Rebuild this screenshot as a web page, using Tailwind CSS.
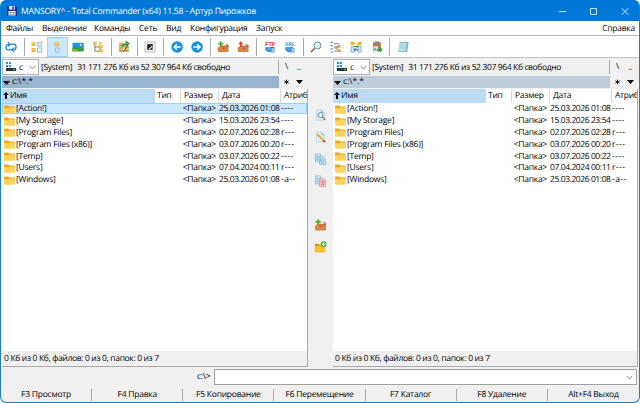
<!DOCTYPE html>
<html lang="ru">
<head>
  <meta charset="UTF-8" />
  <meta name="viewport" content="width=device-width, initial-scale=1.0" />
  <title>Total Commander</title>
  <script src="https://cdn.jsdelivr.net/npm/@tailwindcss/browser@4"></script>
</head>
<body class="bg-white overflow-hidden">

  <!-- Shared icons -->
  <svg class="hidden">
    <symbol id="folder" viewBox="0 0 11 10" preserveAspectRatio="none">
      <path d="M0 1.5Q0 .5 1 .5H4L5.2 1.7H10Q11 1.7 11 2.7V9H0Z" fill="#f0a814" />
      <path d="M0 3.6H4.2L5.4 2.7H11V8.6Q11 9.6 10 9.6H1Q0 9.6 0 8.6Z" fill="#ffd35c" />
    </symbol>
    <symbol id="pack" viewBox="0 0 14 14">
      <path d="M2 7 5 5.5H11L13 4.5 12.5 12.5H1.5L2 7Z" fill="#c9733a" />
      <path d="M1 8 4 6.5 12 7.5 13 12.5H1.5Z" fill="#d98445" />
      <path d="M6 8 9 9M10 3.5 12 5V7" stroke="#a35a2c" fill="none" />
    </symbol>
    <symbol id="globe" viewBox="0 0 14 14">
      <path d="M2 7H10V10Q9 12.5 6 12.5T2 10Z" fill="#2f83c9" />
      <path d="M3 8H8M4 10H7" stroke="#7cc4ee" />
      <path d="M8 8H12V13H7V11H8Z" fill="#67a6cf" />
      <path d="M9 9.5H12M9 11.5H12" stroke="#e2f1fa" stroke-width=".8" />
    </symbol>
    <symbol id="page" viewBox="0 0 14 14">
      <path d="M2.5 1.5H8L11 4.5V12.5H2.5Z" fill="#d8eefa" stroke="#a9cde3" stroke-width=".7" />
      <path d="M8 1.5V4.5H11" fill="#b4d9ee" stroke="#8fbdd8" stroke-width=".6" />
    </symbol>
    <symbol id="drive" viewBox="0 0 12 11">
      <path d="M1 0H3V2H1ZM4 0H6V2H4ZM1 3H3V5H1ZM4 3H6V5H4Z" fill="#1697e8" />
      <path d="M1 6H11V9H1Z" fill="#263743" />
      <path d="M8 7.5H10" stroke="#5bd3de" stroke-width=".8" />
    </symbol>
  </svg>

  <div class="w-[640px] h-[403px] flex flex-col overflow-hidden rounded-[6px] bg-[#f0f0f0] border border-[#1681d2] border-t-0 font-['Open_Sans','Noto_Sans',sans-serif] text-[8.5px] leading-[12px] tracking-[-0.24px] text-black [text-rendering:geometricPrecision] whitespace-nowrap">

    <!-- Title bar -->
    <div class="h-[21px] shrink-0 bg-[#0078d7] text-white flex items-center pl-[6px]">
      <svg class="w-[10px] h-[11px] mr-[4px]" viewBox="0 0 10 11">
        <path d="M0 1H9L10 2V11H0Z" fill="#17339b" />
        <path d="M2 1H8V4.5H2Z" fill="#d9dce6" />
        <path d="M5.5 1.5H7V4H5.5Z" fill="#17339b" />
        <path d="M1.5 6H8.5V10.5H1.5Z" fill="#f2f2f2" />
        <path d="M2.5 7.5H4.5M5.5 7.5H7.5M2.5 9.2H4.5M5.5 9.2H7.5" stroke="#555" stroke-width=".8" />
      </svg>
      <span class="text-[8.6px]">MANSORY^ - Total Commander (x64) 11.58 - Артур Пирожков</span>
      <svg class="w-[72px] h-[10px] ml-auto mr-[9px]" viewBox="0 0 72 10" fill="none" stroke="#fff" stroke-width=".8">
        <path d="M1 5.5H8M32.5 2.5H38.5V8.5H32.5ZM63.7 2.2 70.3 8.8M70.3 2.2 63.7 8.8" />
      </svg>
    </div>

    <!-- Menu -->
    <div class="h-[15px] shrink-0 bg-white border-b border-[#b5b5b5] flex items-center pt-px pl-[5px] pr-[4px]">
      <span class="w-[36px]">Файлы</span>
      <span class="w-[52px]">Выделение</span>
      <span class="w-[45px]">Команды</span>
      <span class="w-[27px]">Сеть</span>
      <span class="w-[24px]">Вид</span>
      <span class="w-[66px]">Конфигурация</span>
      <span>Запуск</span>
      <span class="ml-auto">Справка</span>
    </div>

    <!-- Toolbar -->
    <div class="h-[22px] shrink-0 bg-white border-b border-[#c4c4c4] flex items-center *:shrink-0 [&>svg]:w-[20.2px] [&>svg]:h-[20px] [&>svg]:px-[3.6px] [&>i]:w-[6.1px] [&>i]:h-[18px] [&>i]:bg-[linear-gradient(#aaa,#aaa)] [&>i]:bg-[length:1px_18px] [&>i]:bg-no-repeat [&>i]:bg-center">
      <svg viewBox="0 0 14 14" fill="none" stroke="#1583cf" stroke-width="1.3">
        <path d="M8 10H4Q1.5 10 1.5 7.2T4 4.3H5M6 4H9.5Q12.3 4 12.3 7T9.8 10" />
        <path d="M3.5 1.8 6 4.2 3.5 6.5M10.5 7.7 8 10 10.5 12.2" />
      </svg>
      <i></i>
      <svg viewBox="0 0 14 14">
        <path d="M1 1.5H5.5V6H1ZM1 8H5.5V12.5H1Z" fill="#efba3a" />
        <path d="M2 3H4.8M2 9.5H4.8" stroke="#ffe289" />
        <path d="M7.5 2H12V6H7.5ZM7.5 8H12V12.5H7.5Z" fill="#e7f5fd" stroke="#69acd5" stroke-width=".8" />
      </svg>
      <svg class="bg-[#cce8ff] outline outline-[#99d1ff] -outline-offset-1" viewBox="0 0 14 14">
        <path d="M4.5 1.8H9.5V6H4.5Z" fill="#efb42f" />
        <path d="M5.5 3.5H9" stroke="#ffe48c" />
        <path d="M5.5 8H9V12.5H5.5Z" fill="#e7f5fd" stroke="#69acd5" stroke-width=".8" />
      </svg>
      <svg viewBox="0 0 14 14">
        <path d="M1 2.5H13V11.5H1Z" fill="#2194ec" />
        <path d="M1 8Q4 5.5 7 8T13 7V11.5H1Z" fill="#3a9a27" />
        <path d="M1 9.5Q5 8 8 11.5H1Z" fill="#82bd24" />
        <circle cx="9.8" cy="4.7" r="1.2" fill="#ffe34b" />
      </svg>
      <svg viewBox="0 0 14 14">
        <path d="M3.5 4V11.5H8M3.5 7H8M9 8V11" stroke="#777" fill="none" />
        <path d="M1.5 1.5H5.5V5H1.5ZM7.5 4.5H12V8H7.5ZM7.5 9.5H12V13H7.5Z" fill="#f0b32e" />
        <path d="M2.5 3H5M8.5 6H11M8.5 11H11" stroke="#ffe38a" />
        <path d="M8 1.5H11V3.5H8Z" fill="#f0b32e" />
      </svg>
      <i></i>
      <svg viewBox="0 0 14 14">
        <path d="M1.5 2H6V12.5H1.5Z" fill="#f1c14c" />
        <path d="M6.5 4H12V12.5H6.5Z" fill="#f1c14c" />
        <path d="M2 5H6M2 8H6M2 11H6M8 7H12M8 11H12" stroke="#5a8db1" />
        <path d="M5.5 7Q6 3.5 9.5 3.5M8.5 1 12 3.2 9 5.8" stroke="#168a2c" stroke-width="1.5" fill="none" />
        <path d="M6 12.5 10.5 6" stroke="#665028" />
      </svg>
      <i></i>
      <svg viewBox="0 0 14 14">
        <path d="M1.5 1.5H12.5V12.5H1.5Z" fill="#f2f2f2" stroke="#aaa" stroke-width=".8" />
        <path d="M4 4H10V10H4Z" fill="#111" />
        <path d="M5 9.5 9.5 5V9.5Z" fill="#fff" />
        <path d="M7.5 8.4 9 7.3V9.5H7.5Z" fill="#111" />
      </svg>
      <i></i>
      <svg viewBox="0 0 14 14" fill="none" stroke="#fff" stroke-width="1.7">
        <circle cx="7" cy="7" r="6.2" fill="#1590e4" stroke="none" />
        <path d="M11 7H4M6.8 4 3.8 7 6.8 10" />
      </svg>
      <svg viewBox="0 0 14 14" fill="none" stroke="#fff" stroke-width="1.7">
        <circle cx="7" cy="7" r="6.2" fill="#1590e4" stroke="none" />
        <path d="M3 7H10M7.2 4 10.2 7 7.2 10" />
      </svg>
      <i></i>
      <svg viewBox="0 0 14 14">
        <use href="#pack" width="14" height="14" />
        <path d="M4.5 .8V6.5M1.7 3.5H7.3" stroke="#45ad2b" stroke-width="1.8" />
      </svg>
      <svg viewBox="0 0 14 14">
        <use href="#pack" width="14" height="14" />
        <path d="M4.5 7V3" stroke="#dd3c35" stroke-width="1.8" />
        <path d="M1.7 4 4.5 .8 7.3 4Z" fill="#dd3c35" />
      </svg>
      <i></i>
      <svg viewBox="0 0 14 14">
        <use href="#globe" width="14" height="14" />
        <text x="1.6" y="5.6" letter-spacing="0" font-family="Liberation Mono, monospace" font-size="6" font-weight="bold" fill="#ed1c24">FTP</text>
        <path d="M8 7.4H12" stroke="#ed1c24" />
      </svg>
      <svg viewBox="0 0 14 14">
        <use href="#globe" width="14" height="14" />
        <text x="1.6" y="5.6" letter-spacing="0" font-family="Liberation Mono, monospace" font-size="6" font-weight="bold" fill="#2a9de0">URL</text>
      </svg>
      <i></i>
      <svg viewBox="0 0 14 14">
        <path d="M1.5 12.5 5.5 8.3" stroke="#a4643c" stroke-width="1.7" />
        <circle cx="8.5" cy="5.3" r="3.8" fill="#d9f1ff" stroke="#64819b" />
      </svg>
      <svg viewBox="0 0 14 14">
        <path d="M1 2H3.5M1 5.5H3.5M1 9H3.5M1 12.5H3.5" stroke="#4199d3" stroke-width="1.4" />
        <path d="M4.5 3.5H10M4.5 7H12M4.5 11.5H12.5" stroke="#737980" />
        <path d="M11.5 4.5 6 8 12 11.5" stroke="#d58c23" stroke-width="1.3" fill="none" />
      </svg>
      <svg viewBox="0 0 14 14">
        <path d="M1 1.5H5.5V5H1ZM8.5 1.5H13V5H8.5Z" fill="#edb22c" />
        <path d="M1.5 6.5H5V12.5H1.5ZM9 6.5H12.5V12.5H9Z" fill="#cce8f7" stroke="#68a6cc" stroke-width=".7" />
        <path d="M4.5 6.5H9M7.5 5 9.2 6.5 7.5 8" stroke="#168c36" fill="none" />
        <path d="M9.5 10H5M6.5 8.5 4.8 10 6.5 11.5" stroke="#204a98" fill="none" />
      </svg>
      <svg viewBox="0 0 14 14">
        <path d="M2.5 2H11V12H2.5Z" fill="#bd7435" />
        <path d="M4.5 1H9V3.5H4.5Z" fill="#7d8790" />
        <path d="M3 6H8V13H3Z" fill="#d4edf8" />
        <text x="2.9" y="11.6" font-family="Liberation Sans, sans-serif" font-size="5.5" fill="#4b6b80">A</text>
        <path d="M7 9H10V6.5L13 10 10 13V11H7Z" fill="#3ba52d" />
      </svg>
      <i></i>
      <svg viewBox="0 0 14 14">
        <path d="M3.5 2H13L11.5 12.5H1.5Z" fill="#83bfcd" />
        <path d="M3 2H10.8L9.5 11.5H1.7Z" fill="#b8e2ea" />
        <path d="M4 4H9.5M3.8 6H9.2M3.5 8H9" stroke="#93c8d4" stroke-width=".6" />
        <path d="M3.5 2H12.6" stroke="#668b96" stroke-dasharray="1 .6" />
      </svg>
    </div>

    <!-- File panels -->
    <div class="h-[309px] shrink-0 flex pl-px pr-px">
      <div data-panel="left" class="w-[306px] shrink-0"></div>
      <div class="w-[25px] shrink-0 pt-[46px] flex flex-col items-center [&>svg]:w-[13px] [&>svg]:h-[22.1px] [&>svg]:py-[4px]">
        <svg viewBox="0 0 14 14">
          <use href="#page" width="14" height="14" />
          <circle cx="7" cy="7" r="2.6" fill="#e8f8ff" stroke="#617e96" />
          <path d="M9 9 12 12" stroke="#ab6640" stroke-width="1.5" />
        </svg>
        <svg viewBox="0 0 14 14">
          <use href="#page" width="14" height="14" />
          <path d="M3.5 4 10.5 11" stroke="#f2ac27" stroke-width="2" />
          <path d="M10 10.5 12 12.5" stroke="#d53b2d" stroke-width="2" />
        </svg>
        <svg viewBox="0 0 14 14">
          <path d="M1.5 1.5H7V10H1.5ZM6 4H10L12.5 6.5V13H6Z" fill="#d4ebf8" stroke="#84b8d8" stroke-width=".8" />
          <path d="M2.5 4H5M2.5 6H5M2.5 8H5M7.5 7H11M7.5 9H11M7.5 11H11" stroke="#579ac5" stroke-width=".8" />
        </svg>
        <svg viewBox="0 0 14 14">
          <path d="M1.5 1.5H7V10H1.5Z" fill="#d4ebf8" stroke="#84b8d8" stroke-width=".8" />
          <path d="M6 4H10L12.5 6.5V13H6Z" fill="#f7c2c7" stroke="#df8c96" stroke-width=".8" />
          <path d="M2.5 4H5M2.5 6H5M2.5 8H5" stroke="#579ac5" stroke-width=".8" />
          <path d="M7.5 7H11M7.5 9H11M7.5 11H11" stroke="#d5596a" stroke-width=".8" />
        </svg>
        <svg class="mt-[22px]" viewBox="0 0 14 14">
          <use href="#pack" width="14" height="14" />
          <path d="M4.5 .8V6.5M1.7 3.5H7.3" stroke="#45ad2b" stroke-width="1.8" />
        </svg>
        <svg viewBox="0 0 14 14">
          <path d="M1 3.5H5L6 5H12V12.5H1Z" fill="#d99c12" />
          <path d="M1 6H12V12.5H1Z" fill="#f4c430" />
          <circle cx="10.3" cy="4" r="3.2" fill="#55b52d" />
          <path d="M8.5 4H12.1M10.3 2.2V5.8" stroke="#fff" stroke-width="1.1" />
        </svg>
      </div>
      <div data-panel="right" class="w-[305px] shrink-0"></div>
    </div>

    <!-- Command line -->
    <div class="h-[19px] shrink-0 flex items-center pl-[196px] pr-[2px] pt-px">
      <span class="w-[17px]">c:\&gt;</span>
      <div class="grow h-[16px] bg-white border border-[#a0a0a0] flex items-center justify-end pr-[3px]">
        <svg class="w-[7px] h-[5px]" viewBox="0 0 7 5" fill="none" stroke="#777" stroke-width=".9"><path d="M.7 1 3.5 4 6.3 1" /></svg>
      </div>
    </div>

    <!-- Function keys -->
    <div class="grow grid grid-cols-7 items-center text-center pt-px [&>span:not(:last-child)]:border-r [&>span]:border-[#aaa]">
      <span>F3 Просмотр</span>
      <span>F4 Правка</span>
      <span>F5 Копирование</span>
      <span>F6 Перемещение</span>
      <span>F7 Каталог</span>
      <span>F8 Удаление</span>
      <span>Alt+F4 Выход</span>
    </div>
  </div>

  <script>
    const files = [
      ["Action!", "25.03.2026 01:08", "----"],
      ["My Storage", "15.03.2026 23:54", "----"],
      ["Program Files", "02.07.2026 02:28", "r---"],
      ["Program Files (x86)", "03.07.2026 00:20", "r---"],
      ["Temp", "03.07.2026 00:22", "----"],
      ["Users", "07.04.2024 00:11", "r---"],
      ["Windows", "25.03.2026 01:08", "-a--"],
    ];

    document.querySelectorAll("[data-panel]").forEach((panel) => {
      const active = panel.dataset.panel === "left";

      const rows = files.map(([name, date, attr], i) => `
        <div class="h-[11.85px] shrink-0 flex items-center pt-[1.5px] leading-[10px] *:shrink-0 ${active && i === 0 ? "bg-[#cce8ff] outline outline-[#99d1ff] -outline-offset-1" : ""}">
          <svg class="w-[11px] h-[9px] ml-[2px] mr-px"><use href="#folder" /></svg>
          <span class="w-[164px]">[${name}]</span>
          <span class="w-[36px] text-right">&lt;Папка&gt;</span>
          <span class="w-[65px] pl-[3px] tracking-[-0.42px]">${date}</span>
          <span class="tracking-[0.4px]">${attr}</span>
        </div>`).join("");

      panel.innerHTML = `
        <div class="h-[18px] flex items-center *:shrink-0">
          <div class="w-[37px] h-[16px] bg-white border border-[#b0b0b0] flex items-center pl-[2px] pr-[2px]">
            <svg class="w-[12px] h-[11px] mr-[2px]"><use href="#drive" /></svg>
            <span class="pt-px">c</span>
            <svg class="w-[7px] h-[5px] ml-auto" viewBox="0 0 7 5" fill="none" stroke="#777" stroke-width=".9"><path d="M.7 1 3.5 4 6.3 1" /></svg>
          </div>
          <span class="w-[239px] pl-[2px] pt-[2px] tracking-[-0.37px]"><span class="mr-[5px]">[System]</span>31 171 276 Кб из 52 307 964 Кб свободно</span>
          <span class="h-[14px] border-l border-[#aaa] pl-[6px] pt-px w-[19px]">\\</span>
          <span class="pt-[2px]">..</span>
        </div>
        <div class="h-[12px] flex items-center *:shrink-0">
          <div class="w-[277px] h-full flex items-center ${active ? "bg-[#99b4d1]" : "bg-[#bfcddb]"}">
            <svg class="w-[7px] h-[4px] ml-px mr-[2px] mt-px" viewBox="0 0 7 4"><path d="M0 0H7L3.5 4Z" /></svg>
            <span class="tracking-normal">c:\\*.*</span>
          </div>
          <svg class="w-[5px] h-[6px] ml-[5px] mr-[7px]" viewBox="0 0 6 6" stroke="#111" stroke-width="1.1"><path d="M3 .3V5.7M.5 1.6 5.5 4.4M.5 4.4 5.5 1.6" /></svg>
          <svg class="w-[7px] h-[4px]" viewBox="0 0 7 4"><path d="M0 0H7L3.5 4Z" /></svg>
        </div>
        <div class="h-[278px] mt-px border-r border-b border-[#aaa] bg-white flex flex-col overflow-hidden">
          <div class="h-[13.5px] shrink-0 flex leading-[14px] *:h-full *:shrink-0">
            <div class="w-[153px] bg-[#bcdcf4] flex items-center">
              <svg class="w-[6px] h-[7px] ml-px mr-px" viewBox="0 0 6 7"><path d="M3 0 6 3H4V7H2V3H0Z" /></svg>Имя
            </div>
            <div class="w-[26px] pl-[2px] border-r border-[#d8d8d8]">Тип</div>
            <div class="w-[38px] pl-[3px] border-r border-[#d8d8d8]">Размер</div>
            <div class="w-[62px] pl-[3px] border-r border-[#d8d8d8]">Дата</div>
            <div class="pl-[3px] tracking-[-0.3px]">Атриб</div>
          </div>
          ${rows}
          <div class="h-[15px] shrink-0 mt-auto bg-[#f0f0f0] pl-[2px] leading-[16px] tracking-[-0.34px]">0 Кб из 0 Кб, файлов: 0 из 0, папок: 0 из 7</div>
        </div>`;
    });
  </script>
</body>
</html>
